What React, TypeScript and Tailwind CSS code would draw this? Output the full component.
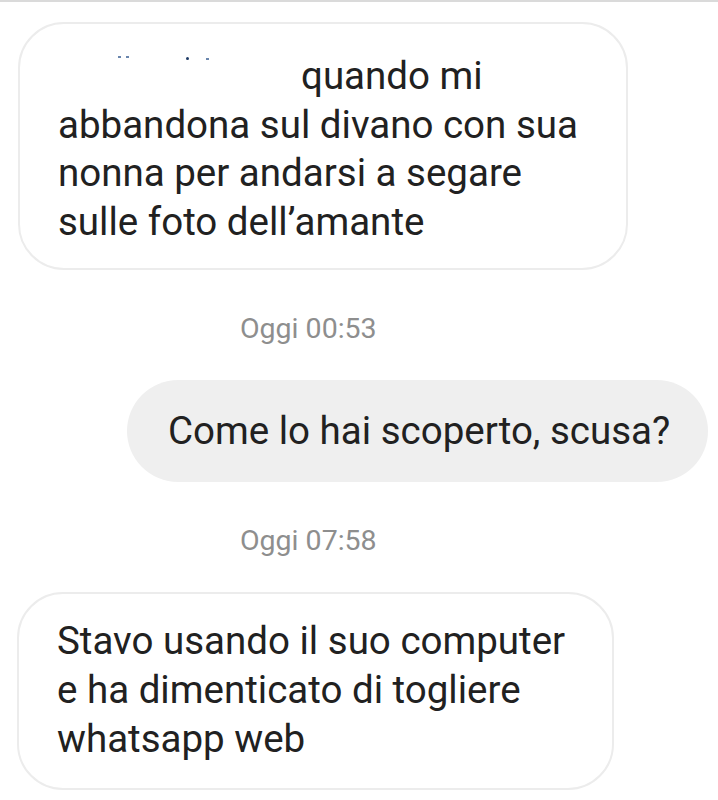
import React from "react";

export default function App() {
  const font = { fontFamily: "Roboto, 'Liberation Sans', sans-serif" };
  return (
    <div
      className="w-[718px] h-[800px] bg-white border-t-2 border-[#dadada] overflow-hidden flex flex-col text-[#212121]"
      style={font}
    >
      <div className="ml-[18px] mt-[20px] w-[610px] h-[248px] rounded-[46px] border-2 border-[#ececec] pl-[38px] pt-[28px] text-[38.5px] leading-[48.5px]">
        <div className="relative">
          <span className="inline-block w-[243px] h-[10px] relative align-baseline">
            <span className="absolute left-[60px] top-[-23px] w-[3px] h-[2px] bg-[#6a86ad]" />
            <span className="absolute left-[68px] top-[-23px] w-[3px] h-[2px] bg-[#6a86ad]" />
            <span className="absolute left-[128px] top-[-22px] w-[3px] h-[3px] rounded-full bg-[#1f3b66]" />
            <span className="absolute left-[148px] top-[-21px] w-[3px] h-[2px] bg-[#6a86ad]" />
          </span>
          quando mi
          <br />
          abbandona sul divano con sua
          <br />
          nonna per andarsi a segare
          <br />
          sulle foto dell’amante
        </div>
      </div>

      <div className="pl-[240px] mt-[43px] text-[28.5px] leading-[32px] text-[#8e8e8e]">
        Oggi 00:53
      </div>

      <div className="ml-[127px] mt-[35px] w-[581px] h-[102px] rounded-full bg-[#efefef] flex items-center pl-[41px] text-[38.5px]">
        Come lo hai scoperto, scusa?
      </div>

      <div className="pl-[240px] mt-[43px] text-[28.5px] leading-[32px] text-[#8e8e8e]">
        Oggi 07:58
      </div>

      <div className="ml-[17px] mt-[35px] w-[597px] h-[198px] rounded-[46px] border-2 border-[#ececec] pl-[38px] pt-[22px] text-[38.5px] leading-[49px]">
        Stavo usando il suo computer
        <br />
        e ha dimenticato di togliere
        <br />
        whatsapp web
      </div>
    </div>
  );
}
